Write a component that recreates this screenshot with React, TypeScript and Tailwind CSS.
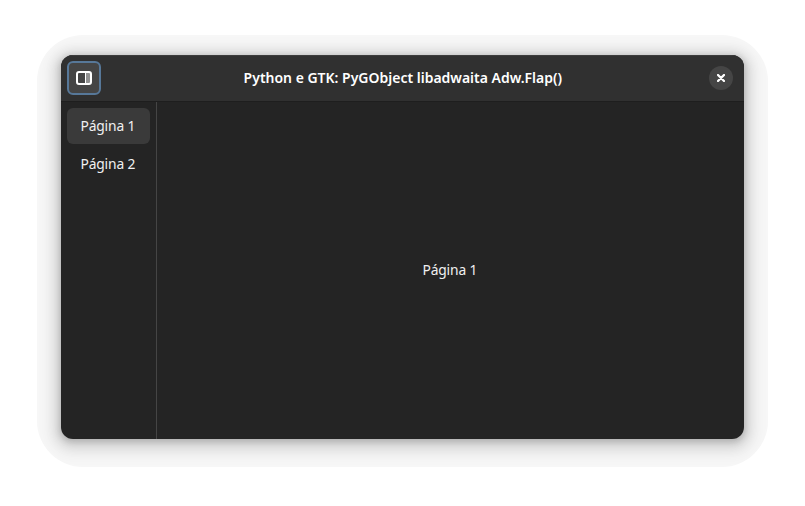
const shadow =
  "shadow-[0_4px_14px_12px_rgba(0,0,0,0.055),0_3px_12px_5px_rgba(0,0,0,0.1),0_2px_6px_1px_rgba(0,0,0,0.16)]";

function SidebarIcon() {
  return (
    <svg width="16" height="14" viewBox="0 0 16 14" fill="none" aria-hidden="true">
      <rect x="9" y="2" width="5" height="10" fill="#929292" />
      <rect x="9" y="2" width="1" height="10" fill="#fff" />
      <rect x="1" y="1" width="14" height="12" rx="2" stroke="#fff" strokeWidth="2" />
    </svg>
  );
}

function CloseIcon() {
  return (
    <svg width="8" height="8" viewBox="0 0 8 8" fill="none" aria-hidden="true">
      <path d="M1 1l6 6M7 1l-6 6" stroke="#fff" strokeWidth="2.3" strokeLinecap="round" />
    </svg>
  );
}

function Label({ children }: { children: string }) {
  return <span className="inline-block scale-x-[0.92] pr-px pb-0.5 whitespace-nowrap">{children}</span>;
}

export default function App() {
  return (
    <div className="h-[506px] w-[805px] bg-white pt-[35px] pl-[37px] font-['Noto_Sans',sans-serif] text-[#f0f0f0]">
      <div className="h-[432px] w-[731px] overflow-hidden rounded-[46px] bg-[#f7f7f7] px-6 pt-5">
        <div className={`flex h-[384px] w-[683px] flex-col overflow-hidden rounded-xl bg-[#242424] ${shadow}`}>
          <header className="grid h-[47px] shrink-0 grid-cols-[34px_1fr_34px] items-center border-b border-[#1e1e1e] bg-[#303030] px-1.5 inset-shadow-[0_1px_0_#3c3c3c]">
            <button className="flex size-[34px] items-center justify-center rounded-md border-2 border-[#577899] bg-[#454545]">
              <SidebarIcon />
            </button>
            <h1 className="flex justify-center text-[15px] leading-5 font-semibold text-white">
              <span className="inline-block scale-x-[0.932] pb-0.5 whitespace-nowrap">
                Python e GTK: PyGObject libadwaita Adw.Flap()
              </span>
            </h1>
            <button className="ml-[5px] flex size-6 items-center justify-center rounded-full bg-[#454545]">
              <CloseIcon />
            </button>
          </header>
          <div className="flex min-h-0 flex-1 text-[15px] tracking-[-0.15px]">
            <nav className="flex w-24 flex-col gap-0.5 border-r border-[#454545] px-1.5 pt-1.5">
              <button className="h-9 w-[83px] rounded-md bg-[#3a3a3a]">
                <Label>Página 1</Label>
              </button>
              <button className="h-9 w-[83px] rounded-md">
                <Label>Página 2</Label>
              </button>
            </nav>
            <main className="flex flex-1 items-center justify-center">
              <Label>Página 1</Label>
            </main>
          </div>
        </div>
      </div>
    </div>
  );
}
